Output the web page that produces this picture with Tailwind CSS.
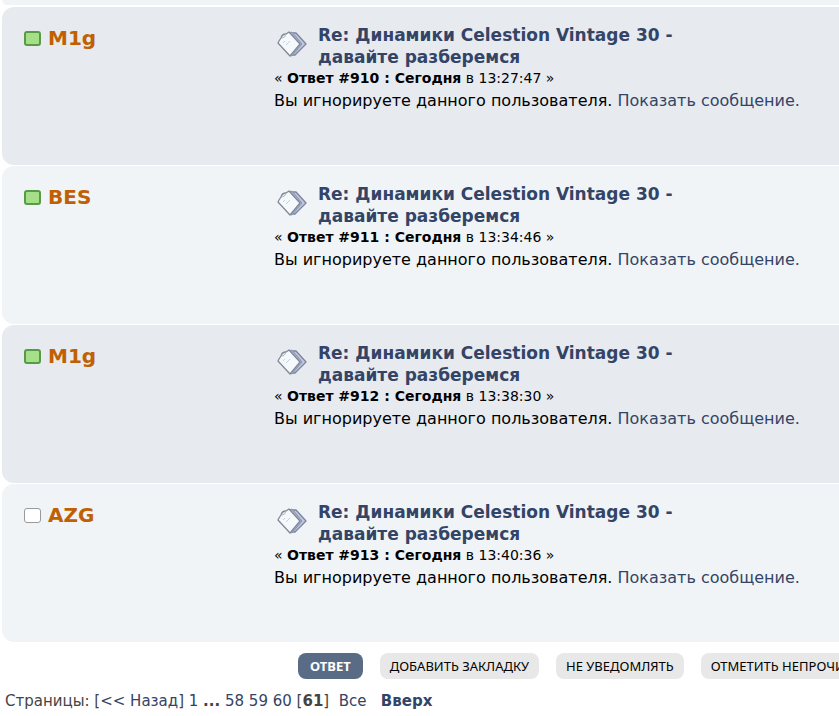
<!DOCTYPE html>
<html lang="ru">
<head>
  <meta charset="UTF-8">
  <meta name="viewport" content="width=device-width, initial-scale=1">
  <title>Динамики Celestion Vintage 30 - давайте разберемся</title>
  <script src="https://cdn.jsdelivr.net/npm/@tailwindcss/browser@4"></script>
</head>
<body class="bg-white text-black font-['Verdana','DejaVu_Sans',sans-serif] overflow-x-hidden">

  <svg class="hidden">
    <symbol id="postIcon" viewBox="0 0 30 28">
      <path d="M16 3 L19 3 L29 14 L18 25 L15 25 Z" fill="#c3c8e0" stroke="#7b84a0" stroke-width="1.3" stroke-linejoin="round"/>
      <path d="M12 3 L15 2 L25 14 L15 26 L12 25 Z" fill="#a9b1cd" stroke="#8b93ae" stroke-linejoin="round"/>
      <path d="M2 11 L4 8 Q5 4 9 4 L12 2 L23 14 L13 26 L1 13 Z" fill="#f5f9fb" stroke="#7f8a99" stroke-width="1.3" stroke-linejoin="round"/>
      <path d="M5 8 Q8 8 9 4" fill="none" stroke="#a9b4c0"/>
      <path d="M6 13 L8 11 M9 15 L13 11" fill="none" stroke="#c6d0da"/>
    </symbol>
  </svg>

  <!-- Posts -->
  <main class="pl-0.5">
    <div class="h-[5px] mb-0.5 bg-[#f0f4f7] rounded-bl-xl"></div>

    <article class="flex min-h-[158px] mb-px pt-[17px] pl-[22px] bg-[#e7eaef] rounded-l-xl">
      <h4 class="w-[250px] shrink-0 flex items-center gap-[7px] h-7 text-xl font-bold">
        <span class="w-[17px] h-[15px] rounded-[3px] border-2 border-[#579b48] bg-[#a5df87]"></span>
        <a href="#" class="text-[#c06002]">M1g</a>
      </h4>
      <div class="flex-1 min-w-0">
        <div class="flex">
          <svg class="w-[30px] h-7 mt-1.5 ml-[3px] mr-[11px] shrink-0"><use href="#postIcon"/></svg>
          <h5 class="max-w-[380px] text-[17px] leading-[22px] font-bold"><a href="#" class="text-[#334466]">Re: Динамики Celestion Vintage 30 - давайте разберемся</a></h5>
        </div>
        <div class="text-sm leading-5">« <strong>Ответ #910 : Сегодня</strong> в 13:27:47 »</div>
        <div class="text-base leading-[26px] whitespace-nowrap">Вы игнорируете данного пользователя. <a href="#" class="text-[#334466]">Показать сообщение.</a></div>
      </div>
    </article>

    <article class="flex min-h-[158px] mb-px pt-[17px] pl-[22px] bg-[#f0f4f7] rounded-l-xl">
      <h4 class="w-[250px] shrink-0 flex items-center gap-[7px] h-7 text-xl font-bold">
        <span class="w-[17px] h-[15px] rounded-[3px] border-2 border-[#579b48] bg-[#a5df87]"></span>
        <a href="#" class="text-[#c06002]">BES</a>
      </h4>
      <div class="flex-1 min-w-0">
        <div class="flex">
          <svg class="w-[30px] h-7 mt-1.5 ml-[3px] mr-[11px] shrink-0"><use href="#postIcon"/></svg>
          <h5 class="max-w-[380px] text-[17px] leading-[22px] font-bold"><a href="#" class="text-[#334466]">Re: Динамики Celestion Vintage 30 - давайте разберемся</a></h5>
        </div>
        <div class="text-sm leading-5">« <strong>Ответ #911 : Сегодня</strong> в 13:34:46 »</div>
        <div class="text-base leading-[26px] whitespace-nowrap">Вы игнорируете данного пользователя. <a href="#" class="text-[#334466]">Показать сообщение.</a></div>
      </div>
    </article>

    <article class="flex min-h-[158px] mb-px pt-[17px] pl-[22px] bg-[#e7eaef] rounded-l-xl">
      <h4 class="w-[250px] shrink-0 flex items-center gap-[7px] h-7 text-xl font-bold">
        <span class="w-[17px] h-[15px] rounded-[3px] border-2 border-[#579b48] bg-[#a5df87]"></span>
        <a href="#" class="text-[#c06002]">M1g</a>
      </h4>
      <div class="flex-1 min-w-0">
        <div class="flex">
          <svg class="w-[30px] h-7 mt-1.5 ml-[3px] mr-[11px] shrink-0"><use href="#postIcon"/></svg>
          <h5 class="max-w-[380px] text-[17px] leading-[22px] font-bold"><a href="#" class="text-[#334466]">Re: Динамики Celestion Vintage 30 - давайте разберемся</a></h5>
        </div>
        <div class="text-sm leading-5">« <strong>Ответ #912 : Сегодня</strong> в 13:38:30 »</div>
        <div class="text-base leading-[26px] whitespace-nowrap">Вы игнорируете данного пользователя. <a href="#" class="text-[#334466]">Показать сообщение.</a></div>
      </div>
    </article>

    <article class="flex min-h-[158px] mb-px pt-[17px] pl-[22px] bg-[#f0f4f7] rounded-l-xl">
      <h4 class="w-[250px] shrink-0 flex items-center gap-[7px] h-7 text-xl font-bold">
        <span class="w-[17px] h-[15px] rounded-[3px] border border-[#999999] bg-white"></span>
        <a href="#" class="text-[#c06002]">AZG</a>
      </h4>
      <div class="flex-1 min-w-0">
        <div class="flex">
          <svg class="w-[30px] h-7 mt-1.5 ml-[3px] mr-[11px] shrink-0"><use href="#postIcon"/></svg>
          <h5 class="max-w-[380px] text-[17px] leading-[22px] font-bold"><a href="#" class="text-[#334466]">Re: Динамики Celestion Vintage 30 - давайте разберемся</a></h5>
        </div>
        <div class="text-sm leading-5">« <strong>Ответ #913 : Сегодня</strong> в 13:40:36 »</div>
        <div class="text-base leading-[26px] whitespace-nowrap">Вы игнорируете данного пользователя. <a href="#" class="text-[#334466]">Показать сообщение.</a></div>
      </div>
    </article>
  </main>

  <!-- Topic actions -->
  <div class="flex gap-[17px] pl-[298px] mt-[11px] overflow-hidden whitespace-nowrap text-[13px] leading-[26px] font-['Tahoma','Noto_Sans',sans-serif]">
    <a href="#" class="px-3 rounded-lg bg-[#5a6c85] text-white font-bold">ОТВЕТ</a>
    <a href="#" class="px-2.5 rounded-lg bg-[#e8e8e8]">ДОБАВИТЬ ЗАКЛАДКУ</a>
    <a href="#" class="px-2.5 rounded-lg bg-[#e8e8e8]">НЕ УВЕДОМЛЯТЬ</a>
    <a href="#" class="px-2.5 rounded-lg bg-[#e8e8e8]">ОТМЕТИТЬ НЕПРОЧИТАННЫМ</a>
  </div>

  <!-- Pages -->
  <nav class="pl-[5px] mt-3 pb-1 text-[15px] leading-5 text-[#444444] whitespace-nowrap">
    Страницы: [<a href="#" class="text-[#334466]">&lt;&lt; Назад</a>] <a href="#" class="text-[#334466]">1</a> <strong>...</strong> <a href="#" class="text-[#334466]">58</a> <a href="#" class="text-[#334466]">59</a> <a href="#" class="text-[#334466]">60</a> [<strong>61</strong>] &nbsp;<a href="#" class="text-[#334466]">Все</a> &nbsp; <a href="#" class="text-[#334466] font-bold">Вверх</a>
  </nav>

</body>
</html>
